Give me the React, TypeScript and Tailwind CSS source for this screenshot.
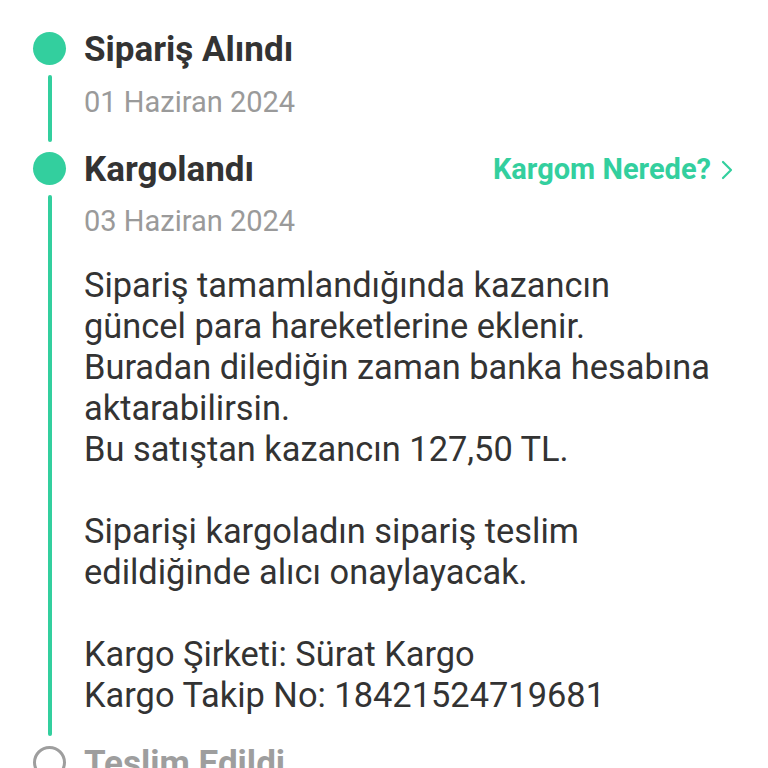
import React from 'react';

const GREEN = 'bg-[#33cf9e]';

const bodyLines = [
  'Sipariş tamamlandığında kazancın',
  'güncel para hareketlerine eklenir.',
  'Buradan dilediğin zaman banka hesabına',
  'aktarabilirsin.',
  'Bu satıştan kazancın 127,50 TL.',
  '',
  'Siparişi kargoladın sipariş teslim',
  'edildiğinde alıcı onaylayacak.',
  '',
  'Kargo Şirketi: Sürat Kargo',
  'Kargo Takip No: 18421524719681',
];

function Chevron() {
  return (
    <svg width="12" height="20" viewBox="0 0 12 20" fill="none" className="ml-[10px]">
      <polyline points="2,2 10,10 2,18" stroke="#33cf9e" strokeWidth="2.2" strokeLinecap="round" strokeLinejoin="round" />
    </svg>
  );
}

export default function App() {
  return (
    <div className="h-[768px] w-[768px] overflow-hidden bg-white font-['Roboto','Liberation_Sans',sans-serif]">
      <div className="pl-[33px] pr-[35px] pt-[32px]">
        {/* step 1 */}
        <div className="flex">
          <div className="flex w-[33px] flex-col items-center">
            <div className={`h-[33px] w-[33px] shrink-0 rounded-full ${GREEN}`} />
            <div className={`my-[10px] w-[4px] flex-1 rounded-full ${GREEN}`} />
          </div>
          <div className="ml-[18px] flex-1 pb-[33px]">
            <div className="flex h-[33px] items-center pt-[2px] text-[35px] font-bold leading-[33px] text-[#333333]">
              Sipariş Alındı
            </div>
            <div className="mt-[20px] text-[29px] leading-[34px] text-[#9a9a9a]">01 Haziran 2024</div>
          </div>
        </div>

        {/* step 2 */}
        <div className="flex">
          <div className="flex w-[33px] flex-col items-center">
            <div className={`h-[33px] w-[33px] shrink-0 rounded-full ${GREEN}`} />
            <div className={`my-[10px] w-[4px] flex-1 rounded-full ${GREEN}`} />
          </div>
          <div className="ml-[18px] flex-1 pb-[30px]">
            <div className="flex h-[33px] items-center justify-between pt-[2px]">
              <span className="text-[35px] font-bold leading-[33px] text-[#333333]">Kargolandı</span>
              <span className="flex items-center text-[29px] font-bold leading-[33px] text-[#33cf9e]">
                Kargom Nerede?
                <Chevron />
              </span>
            </div>
            <div className="mt-[19px] text-[29px] leading-[34px] text-[#9a9a9a]">03 Haziran 2024</div>
            <div className="mt-[27px] text-[34.4px] leading-[41px] text-[#333333]">
              {bodyLines.map((line, i) => (
                <div key={i} className="h-[41px] whitespace-nowrap">
                  {line}
                </div>
              ))}
            </div>
          </div>
        </div>

        {/* step 3 */}
        <div className="flex">
          <div className="flex w-[33px] flex-col items-center">
            <div className="h-[33px] w-[33px] shrink-0 rounded-full border-[3px] border-[#9e9e9e] bg-white" />
          </div>
          <div className="ml-[18px] flex-1">
            <div className="flex h-[33px] items-center pt-[2px] text-[35px] font-bold leading-[33px] text-[#9e9e9e]">
              Teslim Edildi
            </div>
          </div>
        </div>
      </div>
    </div>
  );
}
